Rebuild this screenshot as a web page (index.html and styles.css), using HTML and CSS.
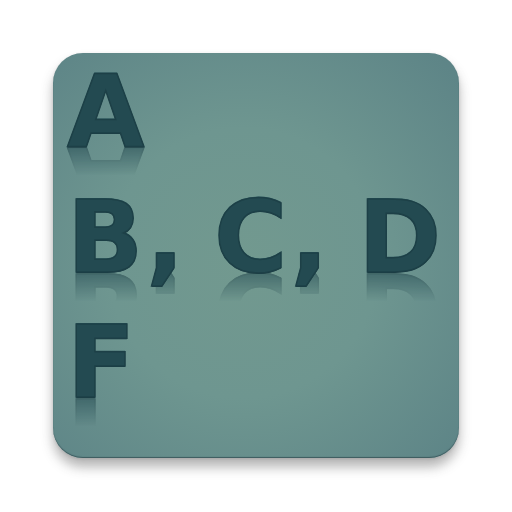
FILE: index.html
```html
<!DOCTYPE html>
<html lang="en">
<head>
<meta charset="utf-8">
<title>A, B, C, D, F</title>
<link rel="stylesheet" href="styles.css">
</head>
<body>
<main class="card">
  <div class="line">A</div>
  <div class="line">B, C, D</div>
  <div class="line">F</div>
</main>
</body>
</html>
```
FILE: styles.css
```css
html, body {
  margin: 0;
  width: 512px;
  height: 512px;
  background: #fff;
  overflow: hidden;
}

body {
  padding: 53px;
  box-sizing: border-box;
}

.card {
  width: 406px;
  height: 405px;
  box-sizing: border-box;
  padding: 19px 0 0 14px;
  display: flex;
  flex-direction: column;
  gap: 50.5px;
  border-radius: 30px;
  background: radial-gradient(ellipse 300px 300px at 190px 210px, #72998f 0%, #6e9690 45%, #5c8386 100%);
  box-shadow:
    inset 0 -1px 1px #3c5a5e,
    0 9px 12px rgba(60, 60, 60, 0.38),
    0 1px 3px rgba(0, 0, 0, 0.12);
}

.line {
  height: 75px;
  line-height: 79px;
  font-family: "DejaVu Sans", Verdana, sans-serif;
  font-weight: 700;
  font-size: 100px;
  letter-spacing: 3px;
  word-spacing: -11px;
  white-space: pre;
  color: #234a51;
  -webkit-text-stroke: 1.5px #1d4047;
  text-shadow:
    0 1px 0 #1a3a42,
    0 -1px 0 #2b565d;
  -webkit-box-reflect: below 0 linear-gradient(transparent 62%, rgba(0, 0, 0, 0.55));
}
```
